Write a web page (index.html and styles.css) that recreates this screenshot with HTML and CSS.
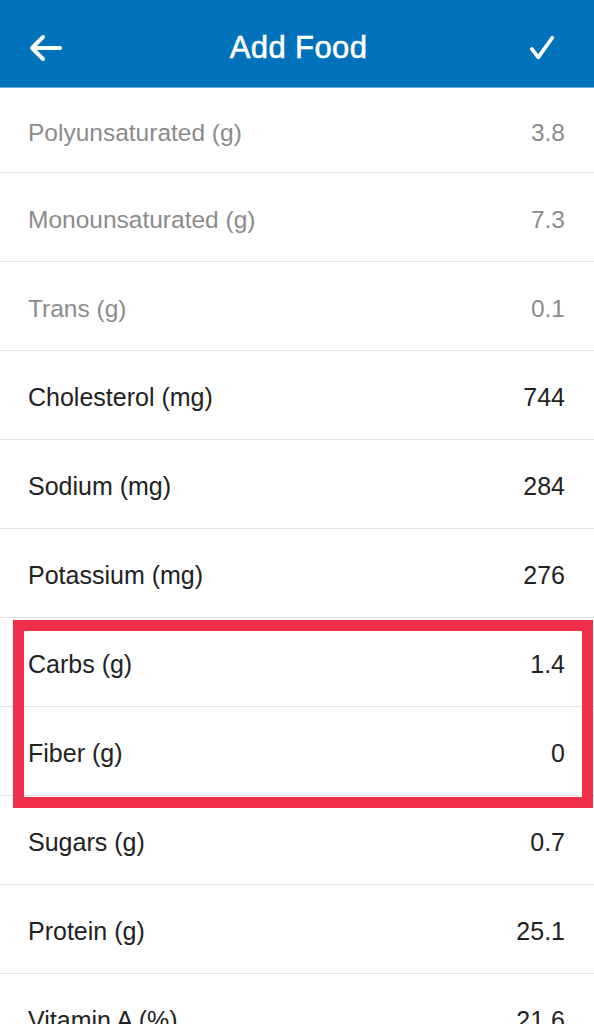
FILE: index.html
```html
<!DOCTYPE html>
<html>
<head>
<meta charset="utf-8">
<link rel="stylesheet" href="styles.css">
</head>
<body>
<div class="app">
  <header class="topbar">
    <svg class="icon back" viewBox="0 0 36 30" width="36" height="30">
      <path d="M33 15 H5 M16 4 L5 15 L16 26" fill="none" stroke="#fff" stroke-width="4" stroke-linecap="round" stroke-linejoin="round"/>
    </svg>
    <h1 class="title">Add Food</h1>
    <svg class="icon check" viewBox="0 0 30 30" width="28" height="28">
      <path d="M4 16 L11 25 L26 4" fill="none" stroke="#fff" stroke-width="4" stroke-linecap="round" stroke-linejoin="round"/>
    </svg>
  </header>
  <main class="list">
    <div class="row row--first muted"><span>Polyunsaturated (g)</span><span>3.8</span></div>
    <div class="row muted"><span>Monounsaturated (g)</span><span>7.3</span></div>
    <div class="row muted"><span>Trans (g)</span><span>0.1</span></div>
    <div class="row"><span>Cholesterol (mg)</span><span>744</span></div>
    <div class="row"><span>Sodium (mg)</span><span>284</span></div>
    <div class="row"><span>Potassium (mg)</span><span>276</span></div>
    <div class="highlight-group">
      <div class="row"><span>Carbs (g)</span><span>1.4</span></div>
      <div class="row"><span>Fiber (g)</span><span>0</span></div>
      <div class="highlight"></div>
    </div>
    <div class="row"><span>Sugars (g)</span><span>0.7</span></div>
    <div class="row"><span>Protein (g)</span><span>25.1</span></div>
    <div class="row"><span>Vitamin A (%)</span><span>21.6</span></div>
  </main>
</div>
</body>
</html>
```

FILE: styles.css
```css
html, body {
  margin: 0;
  padding: 0;
  background: #fff;
}
.app {
  width: 594px;
  height: 1024px;
  overflow: hidden;
  font-family: "Liberation Sans", Arial, sans-serif;
}
.topbar {
  height: 88px;
  background: #0071bb;
  display: flex;
  align-items: center;
  justify-content: space-between;
  padding: 8px 38px 0 27px;
  box-sizing: border-box;
  border-bottom: 1px solid #6fb0dc;
}
.title {
  margin: 0 0 0 6px;
  color: #fff;
  font-size: 31px;
  font-weight: normal;
  letter-spacing: 0.4px;
  -webkit-text-stroke: 0.6px #fff;
}
.icon { display: block; }
.list { display: flex; flex-direction: column; }
.row {
  height: 89px;
  border-bottom: 1px solid #e3e3e3;
  display: flex;
  align-items: center;
  justify-content: space-between;
  padding: 5px 29px 0 28px;
  box-sizing: border-box;
  font-size: 25px;
  color: #222;
  flex-shrink: 0;
}
.row--first { height: 85px; }
.muted { color: #8b8b8b; font-size: 24.5px; }
.highlight-group { position: relative; }
.highlight {
  position: absolute;
  left: 13px;
  right: 1px;
  top: 2px;
  height: 188px;
  border: 11px solid #f0304a;
  box-sizing: border-box;
}
```
